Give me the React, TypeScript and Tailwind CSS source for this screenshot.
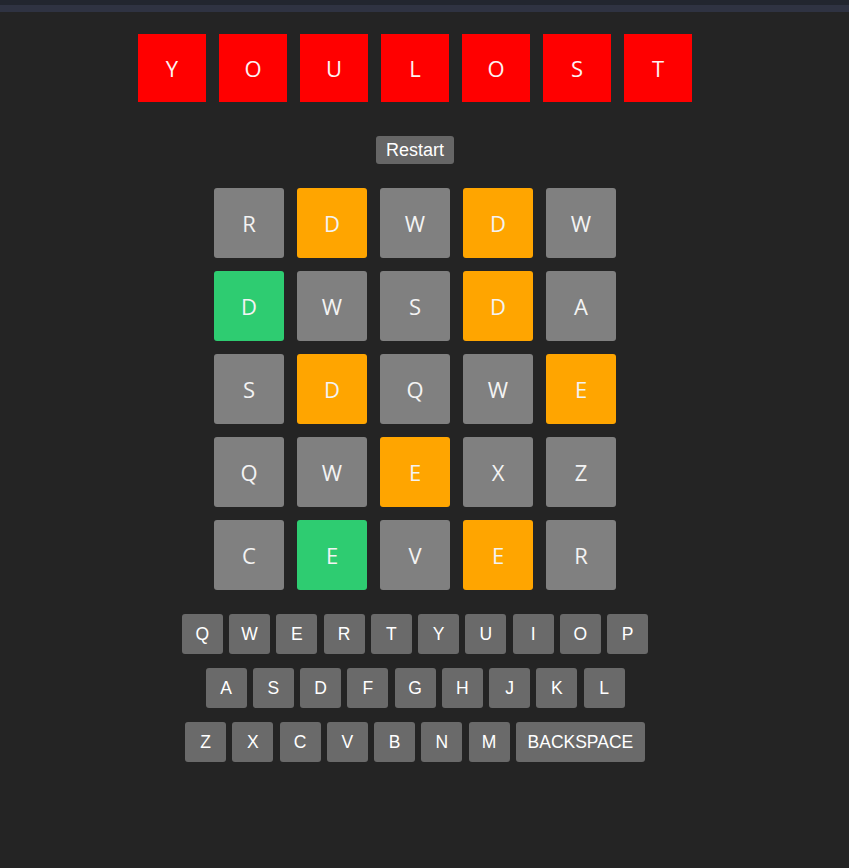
import React from "react";

type Tone = "gray" | "orange" | "green";

const board: [string, Tone][][] = [
  [["R", "gray"], ["D", "orange"], ["W", "gray"], ["D", "orange"], ["W", "gray"]],
  [["D", "green"], ["W", "gray"], ["S", "gray"], ["D", "orange"], ["A", "gray"]],
  [["S", "gray"], ["D", "orange"], ["Q", "gray"], ["W", "gray"], ["E", "orange"]],
  [["Q", "gray"], ["W", "gray"], ["E", "orange"], ["X", "gray"], ["Z", "gray"]],
  [["C", "gray"], ["E", "green"], ["V", "gray"], ["E", "orange"], ["R", "gray"]],
];

const toneClass: Record<Tone, string> = {
  gray: "bg-[#808080]",
  orange: "bg-[#ffa500]",
  green: "bg-[#2ecc71]",
};

const keyRows = [
  ["Q", "W", "E", "R", "T", "Y", "U", "I", "O", "P"],
  ["A", "S", "D", "F", "G", "H", "J", "K", "L"],
  ["Z", "X", "C", "V", "B", "N", "M", "BACKSPACE"],
];

export default function App() {
  return (
    <div className="min-h-[868px] bg-[#242424]">
      <div className="h-[5px] bg-[#22262f]" />
      <div className="h-[7px] bg-[#2f3342]" />
      <div className="flex w-[830px] flex-col items-center pt-[22px] font-['Liberation_Sans',Arial,sans-serif]">
        <div className="flex gap-[13px]">
          {"YOULOST".split("").map((ch, i) => (
            <div
              key={i}
              className="flex h-[68px] w-[68px] items-center justify-center bg-[#ff0000] text-[22px] text-[#fdf2f2] font-['Open_Sans','Noto_Sans',sans-serif]"
            >
              {ch}
            </div>
          ))}
        </div>

        <button className="mt-[34px] h-[28px] rounded-[3px] bg-[#666666] px-[10px] text-[18px] leading-none text-white">
          Restart
        </button>

        <div className="mt-[24px] flex flex-col gap-[13px]">
          {board.map((row, r) => (
            <div key={r} className="flex gap-[13px]">
              {row.map(([ch, tone], c) => (
                <div
                  key={c}
                  className={`flex h-[70px] w-[70px] items-center justify-center rounded-[3px] text-[22px] text-[#f3f3f3] font-['Open_Sans','Noto_Sans',sans-serif] ${toneClass[tone]}`}
                >
                  {ch}
                </div>
              ))}
            </div>
          ))}
        </div>

        <div className="mt-[24px] flex flex-col items-center gap-[14px]">
          {keyRows.map((row, r) => (
            <div key={r} className="flex gap-[6.25px]">
              {row.map((k) => (
                <button
                  key={k}
                  className={`flex h-[40px] items-center justify-center rounded-[3px] bg-[#6a6a6a] text-[17.5px] text-white ${
                    k === "BACKSPACE" ? "w-[129px]" : "w-[41px]"
                  }`}
                >
                  {k}
                </button>
              ))}
            </div>
          ))}
        </div>
      </div>
    </div>
  );
}
